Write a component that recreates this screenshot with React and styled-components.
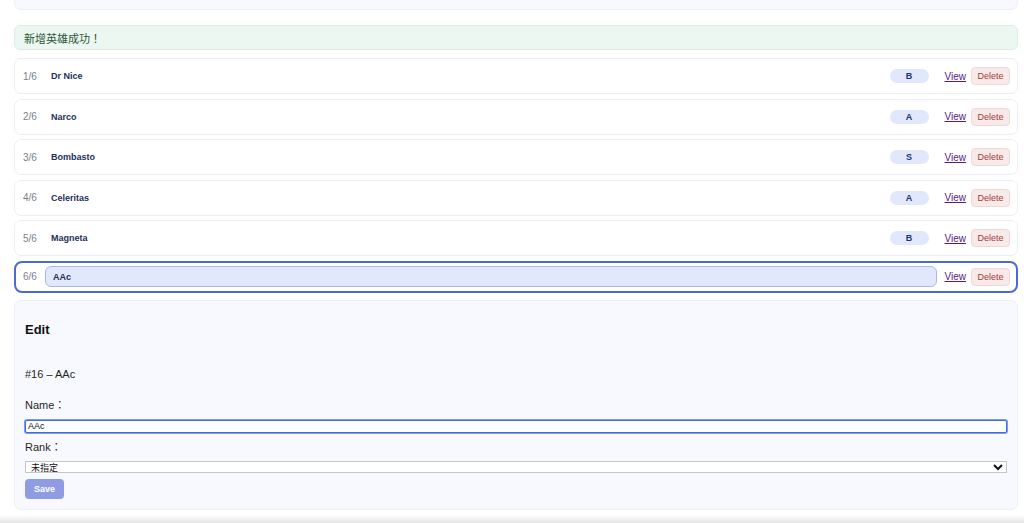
import styled, { createGlobalStyle, css } from 'styled-components';

const GlobalStyle = createGlobalStyle`
    html, body {
        margin: 0;
        padding: 0;
        background: #ffffff;
        font-family: "Liberation Sans", Arial, "Noto Sans CJK TC", sans-serif;
        color: #1f2430;
    }
`;

const Page = styled.div`
    height: 523px;
    overflow: hidden;
    display: flex;
    flex-direction: column;
    padding: 0 6px 0 14px;
`;

const TopPanel = styled.div`
    height: 10px;
    flex-shrink: 0;
    background: #f8f9fe;
    border: 1px solid #eef0f6;
    border-top: none;
    border-radius: 0 0 7px 7px;
    box-sizing: border-box;
`;

const Notice = styled.div`
    margin-top: 15px;
    height: 25px;
    flex-shrink: 0;
    box-sizing: border-box;
    display: flex;
    align-items: center;
    padding: 0 9px;
    background: #edf7f1;
    border: 1px solid #d9efe2;
    border-radius: 6px;
    color: #2a5636;
    font-size: 11px;
`;

const List = styled.div`
    margin-top: 8px;
    display: flex;
    flex-direction: column;
    gap: 4.5px;
`;

const Row = styled.div`
    display: flex;
    align-items: center;
    gap: 8px;
    height: 36px;
    flex-shrink: 0;
    box-sizing: border-box;
    padding: 0 7px;
    background: #ffffff;
    border: 1px solid #eceef3;
    border-radius: 7px;

    ${p => p.$selected && css`
        height: 32px;
        padding: 0 6px;
        border: 2px solid #4d69d4;
        border-radius: 8px;
    `}
`;

const Index = styled.span`
    width: 14px;
    padding-left: 1px;
    font-size: 10px;
    color: #7a8190;
`;

const Name = styled.span`
    flex: 1;
    padding-left: 6px;
    font-size: 9px;
    font-weight: 700;
    color: #24305a;
`;

const NameInput = styled.input`
    flex: 1;
    height: 21px;
    box-sizing: border-box;
    padding: 0 7px;
    border: 1px solid #a9b7ec;
    border-radius: 6px;
    background: #e1e8fc;
    font-family: inherit;
    font-size: 9px;
    font-weight: 700;
    color: #24305a;
    outline: none;
`;

const Badge = styled.span`
    width: 39px;
    height: 14px;
    margin-right: 8px;
    border-radius: 7px;
    background: #e1e8fc;
    display: flex;
    align-items: center;
    justify-content: center;
    font-size: 9px;
    font-weight: 700;
    color: #24336b;
`;

const ViewLink = styled.a`
    font-size: 10px;
    color: #551a8b;
    text-decoration: underline;
`;

const DeleteButton = styled.button`
    width: 39px;
    height: 18px;
    margin-left: -3px;
    padding: 0;
    border: 1px solid #f1d7d7;
    border-radius: 4px;
    background: #f9eaea;
    color: #a23a3a;
    font-family: inherit;
    font-size: 9px;
`;

const EditPanel = styled.section`
    margin-top: 7px;
    height: 210px;
    flex-shrink: 0;
    box-sizing: border-box;
    padding: 21px 10px 10px 10px;
    background: #f8f9fe;
    border: 1px solid #eef0f6;
    border-radius: 7px;
`;

const Title = styled.h3`
    margin: 0;
    font-size: 13px;
    line-height: 16px;
    font-weight: 600;
    color: #111;
`;

const Label = styled.div`
    margin-top: ${p => p.$gap}px;
    font-size: 11px;
    line-height: 14px;
    color: #1f1f1f;
`;

const TextField = styled.input`
    display: block;
    width: 100%;
    height: 13px;
    margin-top: 8px;
    box-sizing: border-box;
    padding: 0 2px;
    border: 1px solid #3f6fd8;
    border-radius: 2px;
    box-shadow: 0 0 0 1px #7d9ce6;
    background: #fff;
    font-family: inherit;
    font-size: 9px;
    color: #111;
    outline: none;
`;

const SelectField = styled.select`
    display: block;
    width: 100%;
    height: 12px;
    margin-top: 7px;
    box-sizing: border-box;
    padding: 0 1px;
    border: 1px solid #c6c6c6;
    border-radius: 0;
    background: #fff;
    font-family: inherit;
    font-size: 9px;
    color: #111;
`;

const SaveButton = styled.button`
    display: block;
    width: 39px;
    height: 20px;
    margin-top: 6px;
    padding: 0;
    border: none;
    border-radius: 4px;
    background: #8f9be2;
    color: #fff;
    font-family: inherit;
    font-size: 9px;
    font-weight: 700;
`;

const BottomShade = styled.div`
    margin: 5px -6px 0 -14px;
    flex: 1;
    background: linear-gradient(#ffffff, #e4e4e4);
`;

const heroes = [
    { id: 1, name: 'Dr Nice', rank: 'B' },
    { id: 2, name: 'Narco', rank: 'A' },
    { id: 3, name: 'Bombasto', rank: 'S' },
    { id: 4, name: 'Celeritas', rank: 'A' },
    { id: 5, name: 'Magneta', rank: 'B' },
    { id: 16, name: 'AAc', rank: '' },
];

const App = () => {
    const selected = heroes[5];

    return (
        <Page>
            <GlobalStyle />
            <TopPanel />
            <Notice>新增英雄成功！</Notice>

            <List>
                {heroes.map((hero, i) => {
                    const isSel = hero.id === selected.id;
                    return (
                        <Row key={hero.id} $selected={isSel}>
                            <Index>{i + 1}/{heroes.length}</Index>
                            {isSel ? (
                                <NameInput defaultValue={hero.name} />
                            ) : (
                                <>
                                    <Name>{hero.name}</Name>
                                    <Badge>{hero.rank}</Badge>
                                </>
                            )}
                            <ViewLink href="#">View</ViewLink>
                            <DeleteButton>Delete</DeleteButton>
                        </Row>
                    );
                })}
            </List>

            <EditPanel>
                <Title>Edit</Title>
                <Label $gap={29}>#16 – AAc</Label>
                <Label $gap={17}>Name：</Label>
                <TextField defaultValue="AAc" />
                <Label $gap={7}>Rank：</Label>
                <SelectField defaultValue="">
                    <option value="">未指定</option>
                    <option value="S">S</option>
                    <option value="A">A</option>
                    <option value="B">B</option>
                </SelectField>
                <SaveButton>Save</SaveButton>
            </EditPanel>

            <BottomShade />
        </Page>
    );
};

export default App;
